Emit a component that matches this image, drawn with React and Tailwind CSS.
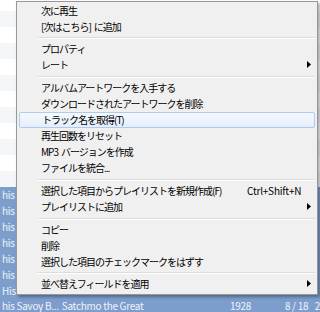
import React from 'react';

const font = { fontFamily: '"Noto Sans CJK JP", "Noto Sans", sans-serif' };

const Gap = () => <span className="inline-block w-[3px]" />;

const menuItems = [
  { label: '次に再生' },
  { label: <>[次はこちら]<Gap />に追加</> },
  { sep: 'h-[6px]' },
  { label: 'プロパティ' },
  { label: 'レート', sub: true },
  { sep: 'h-[7px]' },
  { label: 'アルバムアートワークを入手する' },
  { label: 'ダウンロードされたアートワークを削除' },
  { label: 'トラック名を取得(T)', active: true },
  { label: '再生回数をリセット' },
  { label: <>MP3<Gap />バージョンを作成</> },
  { label: 'ファイルを統合...' },
  { sep: 'h-[7px]' },
  { label: '選択した項目からプレイリストを新規作成(F)', shortcut: 'Ctrl+Shift+N' },
  { label: 'プレイリストに追加', sub: true },
  { sep: 'h-[7px]' },
  { label: 'コピー' },
  { label: '削除' },
  { label: '選択した項目のチェックマークをはずす' },
  { sep: 'h-[6px]' },
  { label: '並べ替えフィールドを適用', sub: true },
];

const Arrow = () => (
  <svg width="4" height="7" viewBox="0 0 4 7" className="absolute right-[6px] top-[4px]">
    <path d="M0 0 L4 3.5 L0 7 Z" fill="#000" />
  </svg>
);

const MenuRow = ({ item }) => {
  if (item.sep) {
    return (
      <div className={`${item.sep} flex flex-col justify-center pl-[21px] pr-[2px]`}>
        <div className="h-px bg-[#dcdcdc]" />
        <div className="h-px bg-white" />
      </div>
    );
  }
  return (
    <div
      className={`relative h-[16px] flex items-center text-[10px] tracking-[-1px] text-black leading-none ${
        item.active
          ? 'mx-[2px] pl-[22px] border border-[#aecbef] rounded-[2px] bg-gradient-to-b from-[#f5f9fe] to-[#e5eefb]'
          : 'pl-[24px]'
      }`}
    >
      <span className="flex items-center">{item.label}</span>
      {item.shortcut && (
        <span className="absolute left-[230px] tracking-[-0.2px]">{item.shortcut}</span>
      )}
      {item.sub && <Arrow />}
    </div>
  );
};

const bgRows = Array.from({ length: 20 }, (_, i) => i);

export default function App() {
  return (
    <div className="relative w-[320px] h-[312px] overflow-hidden bg-white" style={font}>
      {/* track list behind the menu */}
      <div className="flex flex-col mt-[-5px]">
        {bgRows.map((i) => {
          const selected = i >= 12;
          const last = i === 19;
          return (
            <div
              key={i}
              className={`flex text-[10px] leading-none tracking-[-0.3px] whitespace-nowrap ${
                last ? 'h-[13px] items-end' : 'h-[16px] items-center'
              } ${
                selected
                  ? 'bg-[#7d9ecd] text-[#eef3fa]'
                  : i % 2 === 0
                  ? 'bg-white'
                  : 'bg-[#f4f6f9]'
              }`}
            >
              {selected && !last && <span className="pl-[2px]">{i === 18 ? 'His' : 'his'}</span>}
              {last && (
                <div className="flex w-full pb-[1px]">
                  <span className="pl-[2px] w-[62px]">his Savoy B...</span>
                  <span className="w-[169px]">Satchmo the Great</span>
                  <span className="w-[55px]">1928</span>
                  <span className="w-[30px]">8 / 18</span>
                  <span>2</span>
                </div>
              )}
            </div>
          );
        })}
      </div>

      {/* context menu */}
      <div className="absolute left-[16px] top-[1px] w-[302px] bg-[#f0f0f0] border border-[#979797] pt-[1px] pb-[2px] shadow-[2px_2px_3px_rgba(0,0,0,0.35)]">
        {menuItems.map((item, i) => (
          <MenuRow key={i} item={item} />
        ))}
      </div>
    </div>
  );
}
